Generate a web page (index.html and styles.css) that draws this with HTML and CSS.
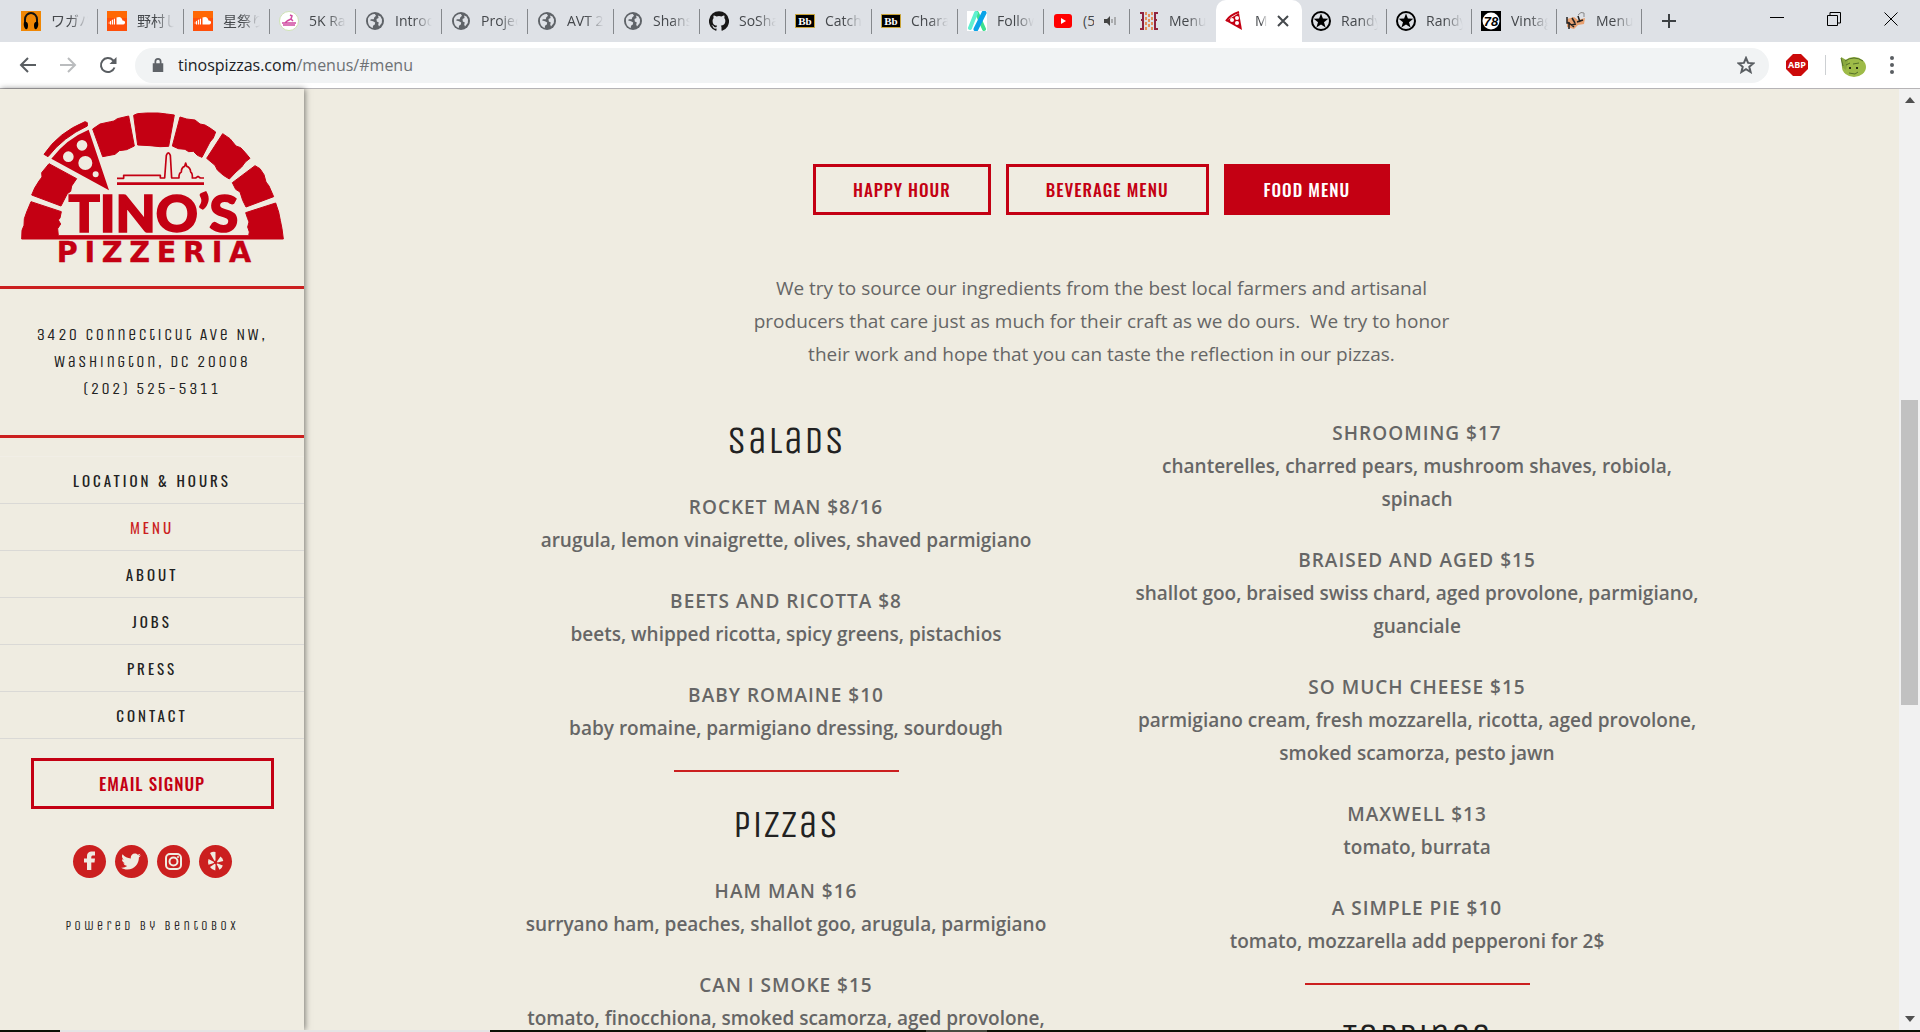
FILE: index.html
```html
<!DOCTYPE html>
<html lang="en">
<head>
<meta charset="utf-8">
<title>Menus | Tino's Pizzeria</title>
<link rel="stylesheet" href="styles.css">
</head>
<body>
<svg class="defs" aria-hidden="true">
  <symbol id="globe" viewBox="0 0 20 20"><circle cx="10" cy="10" r="9" fill="#5f6368"/><path d="M3 7.500C4 4.500 7 2.800 9.800 2.900L11 4.800 9.200 6.400 8.800 8.200H5.800L5.200 9.600 8 10.300 10.200 11.600 9.800 13.600 8 14.800 7.800 17C4.500 16 2.500 13 3 7.500ZM13 4.500 15.500 5.500 17 8.500 16.800 12 14 15.500 13.200 13.500 13.800 11.500 11.800 10.500 11.500 8 13.600 7Z" fill="#dee1e6"/></symbol>
  <symbol id="cloud" viewBox="0 0 20 20"><path d="M0 0H20V20H0Z" fill="#ff4f0a"/><path d="M0 0H20V7H0Z" fill="#ff7a00" opacity=".6"/><path d="M9.500 6.500Q14.500 4.500 15.500 9.500 18.500 9.500 18 12 17.500 13.500 16 13.500H9.500ZM8 7.500V13.500H6.800V8ZM6 8.500V13.500H4.800V9ZM4 9.800V13.500H3V10.300ZM2.400 10.800V13H1.800V10.800Z" fill="#fff"/></symbol>
  <symbol id="star-badge" viewBox="0 0 20 20"><circle cx="10" cy="10" r="9" fill="none" stroke="#000" stroke-width="2"/><path d="M10 2.500 11.900 7.600 17.300 7.800 13 11.200 14.600 16.400 10 13.400 5.400 16.400 7 11.200 2.700 7.800 8.100 7.600Z"/></symbol>
  <symbol id="bb" viewBox="0 0 20 20"><path d="M.5 3.500H19.500V16.500H.5Z" fill="#000" stroke="#c9a437"/><text x="10" y="14" text-anchor="middle" class="bb-text">Bb</text></symbol>
</svg>

<header class="browser">
  <div class="tabstrip">
    <div class="tab"><svg class="fav" viewBox="0 0 20 20"><path d="M0 0H20V20H0Z" fill="#f08705"/><path d="M4 13V8.500a6 6.500 0 0 1 12 0V13" fill="none" stroke="#111" stroke-width="2"/><path d="M3 11q4-1 4 3.500T4.500 18Q2 15 3 11ZM17 11q-4-1-4 3.500t2.500 3.500Q18 15 17 11Z"/></svg><span class="tab-title">ワガハイ</span></div>
    <div class="tab"><svg class="fav"><use href="#cloud"/></svg><span class="tab-title">野村し</span></div>
    <div class="tab"><svg class="fav"><use href="#cloud"/></svg><span class="tab-title">星祭り</span></div>
    <div class="tab"><svg class="fav" viewBox="0 0 20 20"><circle cx="10" cy="10" r="9.500" fill="#fff" stroke="#cfe3b4"/><path d="M11 4 13 5 12 8 14 10M12 8 8 10M3 12H17M4 14H16M8 10 6 12" fill="none" stroke="#d04aa0" stroke-width="1.500"/></svg><span class="tab-title">5K Race</span></div>
    <div class="tab"><svg class="fav"><use href="#globe"/></svg><span class="tab-title">Introd</span></div>
    <div class="tab"><svg class="fav"><use href="#globe"/></svg><span class="tab-title">Project</span></div>
    <div class="tab"><svg class="fav"><use href="#globe"/></svg><span class="tab-title">AVT 21</span></div>
    <div class="tab"><svg class="fav"><use href="#globe"/></svg><span class="tab-title">Shans</span></div>
    <div class="tab"><svg class="fav" viewBox="0 0 24 24"><path fill="#181717" d="M12 .3a12 12 0 0 0-3.800 23.400c.6.100.8-.3.800-.6v-2c-3.300.7-4-1.600-4-1.600-.6-1.400-1.400-1.800-1.400-1.800-1-.7.100-.7.100-.7 1.200.1 1.900 1.200 1.900 1.200 1 1.800 2.800 1.300 3.500 1 0-.8.400-1.300.7-1.600-2.700-.3-5.500-1.300-5.500-6 0-1.200.5-2.300 1.300-3.100-.2-.4-.6-1.600 0-3.200 0 0 1-.3 3.400 1.200a11.500 11.500 0 0 1 6 0c2.300-1.500 3.300-1.200 3.300-1.200.6 1.600.2 2.800 0 3.200.9.800 1.300 1.900 1.300 3.200 0 4.600-2.800 5.600-5.500 5.900.5.400.9 1 .9 2.200v3.300c0 .3.100.7.800.6A12 12 0 0 0 12 .3"/></svg><span class="tab-title">SoSha</span></div>
    <div class="tab"><svg class="fav"><use href="#bb"/></svg><span class="tab-title">Catch</span></div>
    <div class="tab"><svg class="fav"><use href="#bb"/></svg><span class="tab-title">Charac</span></div>
    <div class="tab"><svg class="fav" viewBox="0 0 20 20"><path d="M0 0H20V20H0Z" fill="#fff"/><path d="M10 2 17 18" stroke="#3ee08f" stroke-width="4" stroke-linecap="round"/><path d="M9 2 3 17" stroke="#5ff0d0" stroke-width="4" stroke-linecap="round"/><path d="M17 2 9 18" stroke="#0aa3e8" stroke-width="5" stroke-linecap="round"/></svg><span class="tab-title">Follow</span></div>
    <div class="tab"><svg class="fav" viewBox="0 0 20 20"><rect x="1" y="3" width="18" height="14" rx="3" fill="#f00"/><path d="M8 7 13 10 8 13Z" fill="#fff"/></svg><span class="tab-title tab-title-short">(5)</span><svg class="audio" viewBox="0 0 12 12"><path d="M0 4H3L6 1V11L3 8H0Z" fill="#444"/><path d="M8 4V8M11 2V10" stroke="#777"/></svg></div>
    <div class="tab tab-before-active"><svg class="fav" viewBox="0 0 20 20"><path d="M1 2H4V18H1M19 2H16V18H19M2 9H4M16 9H18" fill="none" stroke="#8f2340" stroke-width="2"/><path d="M7 1V19M10 3V17M13 1V19" stroke="#e58f5a" stroke-width="2" stroke-dasharray="3 2"/></svg><span class="tab-title">Menu</span></div>
    <div class="tab active"><svg class="fav" viewBox="0 0 20 20"><path d="M1 10 14 2 17 19Z" fill="#c40013"/><path d="M1 10Q5 4 14 1" fill="none" stroke="#c40013" stroke-width="2"/><g fill="#fff"><circle cx="7" cy="9" r="2"/><circle cx="12" cy="7" r="2"/><circle cx="12" cy="12" r="2"/></g></svg><span class="tab-title tab-title-min">Menus</span><button class="icon-btn tab-close" aria-label="Close tab"><svg viewBox="0 0 12 12" width="12" height="12"><path d="M1 1 11 11M11 1 1 11" stroke="#45494d" stroke-width="2"/></svg></button></div>
    <div class="tab narrow"><svg class="fav"><use href="#star-badge"/></svg><span class="tab-title">Randy</span></div>
    <div class="tab narrow"><svg class="fav"><use href="#star-badge"/></svg><span class="tab-title">Randy</span></div>
    <div class="tab narrow"><svg class="fav" viewBox="0 0 20 20"><path d="M0 0H20V20H0Z"/><circle cx="10" cy="10" r="8.500" fill="#fff"/><text x="10" y="15" text-anchor="middle" class="vinyl">78</text></svg><span class="tab-title">Vintag</span></div>
    <div class="tab narrow"><svg class="fav" viewBox="0 0 20 20"><path d="M1 8 8 6 12 9 19 7 18 13 12 14 8 18 1 16Z" fill="#e8a070"/><path d="M1 6V12H4M3 18V12L8 16M6 7 9 12M12 5 14 11M11 11 17 9M5 14 10 13" stroke="#222" stroke-width="1.500" fill="none"/><path d="M12 4Q15 0 18 2V6" stroke="#888" fill="none"/></svg><span class="tab-title">Menu</span></div>
    <button class="icon-btn new-tab" aria-label="New tab"><svg viewBox="0 0 16 16" width="16" height="16"><path d="M8 1V15M1 8H15" stroke="#3c4043" stroke-width="2"/></svg></button>
    <div class="window-controls">
      <button class="icon-btn" aria-label="Minimise"><svg viewBox="0 0 14 14" width="14" height="14"><path d="M0 5.500H14" stroke="#000"/></svg></button>
      <button class="icon-btn" aria-label="Restore"><svg viewBox="0 0 14 14" width="14" height="14"><path d="M.5 3.500H10.500V13.500H.5ZM3 3V.5H13.500V11H11" fill="none" stroke="#000"/></svg></button>
      <button class="icon-btn" aria-label="Close"><svg viewBox="0 0 14 14" width="14" height="14"><path d="M.5.5 13.500 13.500M13.500.5.5 13.500" stroke="#000"/></svg></button>
    </div>
  </div>
  <div class="toolbar">
    <button class="icon-btn nav-btn" aria-label="Back"><svg viewBox="0 0 18 18" width="18" height="18"><path d="M17 9H2M9 2 2 9 9 16" fill="none" stroke="#5a5e62" stroke-width="2"/></svg></button>
    <button class="icon-btn nav-btn" aria-label="Forward"><svg viewBox="0 0 18 18" width="18" height="18"><path d="M1 9H16M9 2 16 9 9 16" fill="none" stroke="#babcbe" stroke-width="2"/></svg></button>
    <button class="icon-btn nav-btn" aria-label="Reload"><svg viewBox="0 0 18 18" width="18" height="18"><path d="M15.500 11.500A7 7 0 1 1 14 4.200L16 6.200" fill="none" stroke="#5a5e62" stroke-width="2"/><path d="M17.500 1V8H10.500Z" fill="#5a5e62"/></svg></button>
    <div class="omnibox">
      <svg viewBox="0 0 12 16" width="12" height="14"><path d="M0 6H12V16H0Z" fill="#5f6368"/><path d="M3 7V4a3 3 0 0 1 6 0V7" fill="none" stroke="#5f6368" stroke-width="2"/></svg>
      <span class="url">tinospizzas.com<span class="path">/menus/#menu</span></span>
      <button class="icon-btn" aria-label="Bookmark this page"><svg viewBox="0 0 18 18" width="18" height="18"><path d="M9 2 11.100 6.900 16.400 7.300 12.300 10.800 13.600 16 9 13.200 4.400 16 5.700 10.800 1.600 7.300 6.900 6.900Z" fill="none" stroke="#5a5e62" stroke-width="2"/></svg></button>
    </div>
    <button class="icon-btn abp" aria-label="Adblock Plus"><svg viewBox="0 0 22 22" width="22" height="22"><path d="M7 0H15L22 7V15L15 22H7L0 15V7Z" fill="#cc0a0a"/><text x="11" y="14" text-anchor="middle" class="abp-text">ABP</text></svg></button>
    <span class="divider"></span>
    <button class="icon-btn avatar" aria-label="Profile"><svg viewBox="0 0 26 22" width="26" height="22"><ellipse cx="14" cy="11" rx="12" ry="10" fill="#9ebb48"/><path d="M1 1 8 5 6 14 2 11Z" fill="#8aa93d"/><path d="M1 2 3 10M5 5Q14-1 23 5M6 9 10 7M13 8 19 7M9 17 15 18 18 16" fill="none" stroke="#55702a"/><circle cx="10" cy="12" r="1"/><circle cx="17" cy="12" r="1"/></svg></button>
    <button class="icon-btn" aria-label="Customise"><svg viewBox="0 0 4 18" width="4" height="18"><g fill="#5a5e62"><circle cx="2" cy="2" r="2"/><circle cx="2" cy="9" r="2"/><circle cx="2" cy="16" r="2"/></g></svg></button>
  </div>
</header>

<div class="viewport">
  <aside class="sidebar">
    <a href="#" class="logo" aria-label="Tino's Pizzeria">
      <svg viewBox="63 80 789 456" width="263" height="152" role="img">
        <g fill="#c40013" stroke="#c40013" stroke-width="3" stroke-linejoin="round">
          <path d="M93 349 L184 379 L180 398 L175 404 L182 416 L173 430 L175 451 L746 451 L748 440 L743 425 L747 410 L743 400 L737 382 L827 353 L836 380 L841 405 L846 430 L850 461 L65 461 L66 435 L72 420 L73 400 L80 380Z"/>
          <path d="M147 235 L230 280 L215 302 L212 318 L202 325 L183 362 L95 329 L104 308 L117 287 L126 275 L125 262Z"/>
          <path d="M132 207 Q175 142 255 109 L262 112 L262 122 Q190 155 144 214Z"/>
          <path d="M278 131 L300 116 L332 109 L342 107 L352 100 L386 92 L403 182 L380 193 L358 196 L345 207 L308 214Z"/>
          <path d="M401 90 L412 85 L440 83 L475 83 L500 86 L523 89 L506 183 L480 184 L450 181 L413 179Z"/>
          <path d="M540 95 L560 101 L585 104 L600 116 L615 119 L630 128 L647 140 L640 158 L630 170 L606 216 L592 210 L580 198 L566 199 L555 192 L535 190 L517 182Z"/>
          <path d="M668 145 L690 160 L708 182 L722 187 L735 201 L750 219 L736 230 L725 245 L708 260 L688 281 L670 270 L652 254 L645 240 L620 219Z"/>
          <path d="M765 241 L780 250 L792 268 L798 290 L807 302 L821 334 L738 365 L728 345 L720 320 L707 312 L697 292Z"/>
          <path fill-rule="evenodd" stroke="none" d="M154 220 Q200 160 266 133 L327 315Z M230 180a16 16 0 1 0 32 0a16 16 0 1 0-32 0Z M189 214a16 16 0 1 0 32 0a16 16 0 1 0-32 0Z M235 233a21 21 0 1 0 42 0a21 21 0 1 0-42 0Z M278 267a9 9 0 1 0 18 0a9 9 0 1 0-18 0Z"/>
          <path stroke="none" d="M351 291H612V299H351Z"/>
          <path fill="none" stroke-width="5" d="M351 279H371V270H481V278H494L499 210Q505 195 511 210L515 278H537Q536 264 544 260Q544 246 554 243L557 233L560 243Q571 246 572 260Q578 264 577 278H587L594 273L601 278H612"/>
        </g>
        <g fill="#c40013" stroke="#c40013">
          <text x="460" y="441" text-anchor="middle" class="logo-name">TINO’S</text>
          <text x="472" y="531" text-anchor="middle" class="logo-sub">PIZZERIA</text>
        </g>
      </svg>
    </a>
    <address class="address">3420 Connecticut Ave NW,<br>Washington, DC 20008<br>(202) 525-5311</address>
    <nav class="nav">
      <a href="#">Location &amp; Hours</a>
      <a href="#" class="current">Menu</a>
      <a href="#">About</a>
      <a href="#">Jobs</a>
      <a href="#">Press</a>
      <a href="#">Contact</a>
    </nav>
    <button class="btn signup">Email Signup</button>
    <div class="social">
      <a href="#" aria-label="Facebook"><svg viewBox="0 0 33 33"><path d="M14 25V17.500H11V13.500H14V11Q14 7 18 6.500H22V10.500H19.500Q18.300 10.500 18.300 12V13.500H22L21.500 17.500H18.300V25Z"/></svg></a>
      <a href="#" aria-label="Twitter"><svg viewBox="-5 -5 35 35"><path d="M22.460 6c-.77.350-1.600.580-2.460.690.880-.530 1.560-1.370 1.880-2.380-.830.500-1.750.850-2.720 1.050C18.370 4.500 17.260 4 16 4c-2.350 0-4.270 1.920-4.270 4.290 0 .340.040.670.110.980C8.280 9.090 5.110 7.380 3 4.790c-.37.630-.58 1.370-.58 2.150 0 1.490.750 2.810 1.910 3.560-.710 0-1.370-.2-1.950-.5v.03c0 2.080 1.480 3.820 3.440 4.210a4.220 4.220 0 0 1-1.930.07 4.280 4.280 0 0 0 4 2.980 8.521 8.521 0 0 1-5.330 1.840c-.34 0-.68-.02-1.020-.06C3.440 20.290 5.700 21 8.120 21 16 21 20.330 14.460 20.330 8.790c0-.19 0-.37-.01-.56.840-.6 1.560-1.360 2.140-2.230z"/></svg></a>
      <a href="#" aria-label="Instagram"><svg viewBox="0 0 33 33"><g fill="none" stroke="#efece1" stroke-width="2"><rect x="9" y="9" width="15" height="15" rx="4"/><circle cx="16.500" cy="16.500" r="4"/></g><circle cx="21" cy="12" r="1"/></svg></a>
      <a href="#" aria-label="Yelp"><svg viewBox="0 0 33 33"><path d="M11 8Q14 6 16.500 7V15.500L15.500 16ZM9.500 14 15 17 14.800 18 9.500 19.700Q8.500 17 9.500 14ZM11 22 15.700 18.800 16.600 19.500 16.300 25.500Q13 25 11 22ZM17.600 19 18.600 18.400 23.800 20.500Q23 23.500 20.500 24.800ZM18 16.500 21.500 11.500Q24 13 24.300 16L18.500 17.500Z"/></svg></a>
    </div>
    <a href="#" class="powered">powered by BentoBox</a>
  </aside>

  <main class="content">
    <div class="menu-tabs">
      <button class="btn">Happy Hour</button>
      <button class="btn">Beverage Menu</button>
      <button class="btn selected">Food Menu</button>
    </div>
    <p class="intro">We try to source our ingredients from the best local farmers and artisanal producers that care just as much for their craft as we do ours.&nbsp; We try to honor their work and hope that you can taste the reflection in our pizzas.</p>
    <div class="columns">
      <section class="column">
        <h2>Salads</h2>
        <div class="item"><h3>Rocket Man $8/16</h3><p>arugula, lemon vinaigrette, olives, shaved parmigiano</p></div>
        <div class="item"><h3>Beets and Ricotta $8</h3><p>beets, whipped ricotta, spicy greens, pistachios</p></div>
        <div class="item"><h3>Baby Romaine $10</h3><p>baby romaine, parmigiano dressing, sourdough</p></div>
        <hr>
        <h2>Pizzas</h2>
        <div class="item"><h3>Ham Man $16</h3><p>surryano ham, peaches, shallot goo, arugula, parmigiano</p></div>
        <div class="item"><h3>Can I Smoke $15</h3><p>tomato, finocchiona, smoked scamorza, aged provolone,</p></div>
      </section>
      <section class="column">
        <div class="item"><h3>Shrooming $17</h3><p>chanterelles, charred pears, mushroom shaves, robiola, spinach</p></div>
        <div class="item"><h3>Braised and Aged $15</h3><p>shallot goo, braised swiss chard, aged provolone, parmigiano, guanciale</p></div>
        <div class="item"><h3>So Much Cheese $15</h3><p>parmigiano cream, fresh mozzarella, ricotta, aged provolone, smoked scamorza, pesto jawn</p></div>
        <div class="item"><h3>Maxwell $13</h3><p>tomato, burrata</p></div>
        <div class="item"><h3>A Simple Pie $10</h3><p>tomato, mozzarella add pepperoni for 2$</p></div>
        <hr>
        <h2>Toppings</h2>
      </section>
    </div>
  </main>

  <div class="scrollbar">
    <svg viewBox="0 0 10 6" width="10" height="6"><path d="M0 6 5 0 10 6Z" fill="#505050"/></svg>
    <div class="track"><div class="thumb"></div></div>
    <svg viewBox="0 0 10 6" width="10" height="6"><path d="M0 0 5 6 10 0Z" fill="#505050"/></svg>
  </div>
</div>
<footer class="taskbar"><span class="task-search"></span><span class="task-active"></span></footer>
</body>
</html>
```
FILE: styles.css
```css
* { box-sizing: border-box; }
body {
  margin: 0;
  height: 100vh;
  display: flex;
  flex-direction: column;
  overflow: hidden;
  background: #efece1;
  color: #666;
  font-family: "Open Sans", sans-serif;
}
h2, h3, p { margin: 0; }
a { color: inherit; text-decoration: none; }
.defs { position: absolute; width: 0; height: 0; }

/* Browser frame */
.browser { flex: none; border-bottom: 1px solid #b6b4b6; }
.tabstrip { display: flex; height: 42px; padding-left: 12px; background: #dee1e6; }
.tab {
  display: flex;
  align-items: center;
  flex: none;
  width: 86px;
  padding-left: 9px;
  gap: 10px;
  position: relative;
}
.tab.narrow { width: 85px; }
.tab::after {
  content: "";
  position: absolute;
  right: 0;
  top: 9px;
  width: 1px;
  height: 25px;
  background: #85888c;
}
.tab.active::after, .tab-before-active::after { display: none; }
.tab.active { background: #fff; border-radius: 10px 10px 0 0; }
.fav { flex: none; width: 20px; height: 20px; }
.tab-title {
  width: 37px;
  overflow: hidden;
  white-space: nowrap;
  color: #45484c;
  font: 14px/20px "Open Sans", "Noto Sans CJK JP", sans-serif;
  mask-image: linear-gradient(to right, #000 50%, transparent);
}
.tab-title-short { width: 11px; mask-image: none; }
.tab-title-min { width: 12px; }
.audio { width: 12px; height: 12px; }
.bb-text { font: bold 11px "Liberation Serif", serif; fill: #fff; }
.vinyl { font: italic bold 13px "Liberation Sans", sans-serif; }
.icon-btn {
  display: flex;
  align-items: center;
  justify-content: center;
  padding: 0;
  border: 0;
  background: none;
}
.new-tab { margin-left: 19px; }
.window-controls { display: flex; margin: 0 1px 0 auto; }
.window-controls .icon-btn { width: 57px; height: 37px; }
.toolbar { display: flex; align-items: center; height: 46px; padding: 0 26px 0 8px; background: #fff; }
.nav-btn { width: 40px; height: 40px; }
.omnibox {
  display: flex;
  align-items: center;
  flex: 1;
  gap: 14px;
  height: 35px;
  margin-left: 7px;
  padding: 0 14px 0 17px;
  border-radius: 18px;
  background: #f1f3f4;
}
.url { flex: 1; color: #202124; font-size: 16px; line-height: 24px; }
.path { color: #6d7175; }
.abp { margin: 0 17px 0 17px; }
.abp-text { font: bold 9px "Open Sans", sans-serif; fill: #fff; }
.divider { width: 1px; height: 20px; background: #cdd0d3; }
.avatar { margin: 4px 24px 0 14px; }

/* Page */
.viewport { display: flex; flex: 1; min-height: 0; }
.sidebar {
  flex: none;
  width: 304px;
  box-shadow: 1px 0 6px rgba(0, 0, 0, .5);
  color: #222;
  text-align: center;
}
.logo { display: flex; justify-content: center; padding: 23px 0 22px; border-bottom: 3px solid #cb1f1f; }
.logo-name { font: 900 156px Lato, sans-serif; stroke-width: 5px; }
.logo-sub { font: bold 86px "DejaVu Sans", sans-serif; letter-spacing: 20px; }
.address {
  padding: 32px 0 33px;
  border-bottom: 3px solid #cb1f1f;
  font: 17px/27px "Unica One", sans-serif;
  letter-spacing: 2px;
}
.nav { margin-top: 18px; border-top: 1px solid #f1eee6; }
.nav a {
  display: block;
  border-bottom: 1px solid #dad9d6;
  font: 15px/46px Oswald, sans-serif;
  letter-spacing: 3px;
  text-transform: uppercase;
}
.nav .current { color: #cb1f1f; }
.btn {
  height: 51px;
  padding: 0 37px;
  border: 3px solid #c40013;
  background: none;
  color: #c40013;
  font: 500 17px/24px Oswald, sans-serif;
  letter-spacing: 1px;
  text-transform: uppercase;
}
.btn.selected { background: #c40013; color: #fff; }
.signup { display: block; width: 243px; margin: 19px auto 36px; }
.social { display: flex; justify-content: center; gap: 9px; }
.social a { width: 33px; height: 33px; border-radius: 50%; background: #cb1f1f; }
.social svg { display: block; fill: #efece1; }
.powered { display: block; margin-top: 38px; font: 13px/20px "Unica One", sans-serif; letter-spacing: 3px; }

.content { flex: 1; overflow: hidden; padding-top: 75px; text-align: center; }
.menu-tabs { display: flex; justify-content: center; gap: 15px; }
.intro { max-width: 720px; margin: 57px auto 46px; font-size: 19px; line-height: 33px; }
.columns { display: flex; gap: 60px; max-width: 1202px; margin: 0 auto; }
.column { flex: 1; font-size: 19px; font-weight: 600; line-height: 33px; }
.column h2 {
  margin-bottom: 28px;
  color: #222;
  font: 39px/46px "Unica One", sans-serif;
  letter-spacing: 1px;
}
.column h3 { font: inherit; letter-spacing: 1px; text-transform: uppercase; }
.item + .item { margin-top: 28px; }
.column hr { width: 225px; height: 2px; margin: 25px auto 29px; border: 0; background: #cb1f1f; }

.scrollbar {
  display: flex;
  flex-direction: column;
  align-items: center;
  justify-content: space-between;
  flex: none;
  width: 21px;
  padding: 8px 0;
  background: #f1f1f1;
}
.track { flex: 1; width: 17px; padding-top: 297px; }
.thumb { height: 305px; background: #c1c1c1; }
.taskbar { display: flex; flex: none; height: 2px; background: #0d1206; }
.task-search { width: 430px; margin-left: 60px; background: #e4e4e4; }
.task-active { width: 61px; margin-left: 436px; background: #474b40; }
```
